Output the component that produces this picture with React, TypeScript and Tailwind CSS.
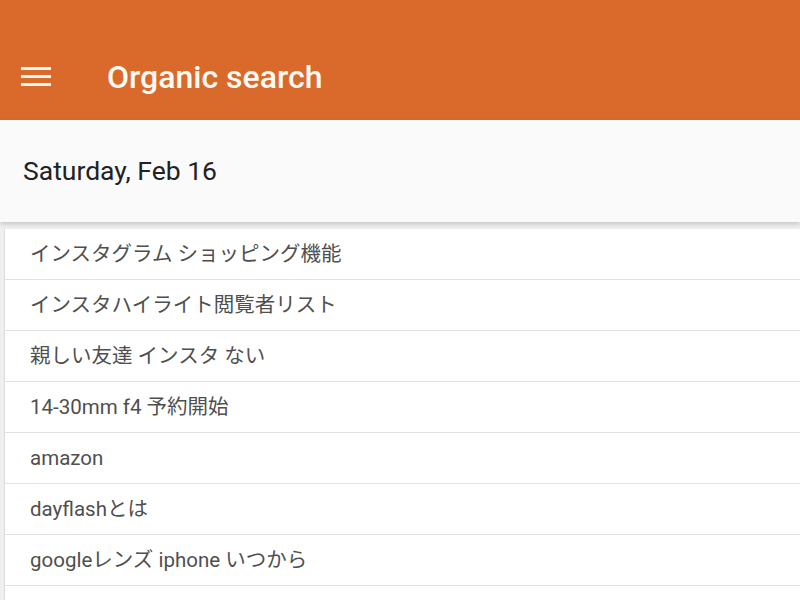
import React from "react";

const queries = [
  "インスタグラム ショッピング機能",
  "インスタハイライト閲覧者リスト",
  "親しい友達 インスタ ない",
  "14-30mm f4 予約開始",
  "amazon",
  "dayflashとは",
  "googleレンズ iphone いつから",
  "",
];

export default function App() {
  return (
    <div
      className="w-[800px] h-[600px] overflow-hidden bg-[#efefef] flex flex-col"
      style={{ fontFamily: 'Roboto, "Noto Sans CJK JP", sans-serif' }}
    >
      {/* App bar with status-bar space on top */}
      <header className="bg-[#d96a2b] h-[120px] pt-[32px] shrink-0">
        <div className="h-[88px] flex items-center">
          <button type="button" aria-label="Menu" className="ml-[21px] w-[30px] flex flex-col gap-[5px]">
            <span className="block h-[3px] w-[30px] bg-[#fff7ee]" />
            <span className="block h-[3px] w-[30px] bg-[#fff7ee]" />
            <span className="block h-[3px] w-[30px] bg-[#fff7ee]" />
          </button>
          <h1 className="ml-[56px] mt-[2px] text-[32px] font-medium text-[#fffaf3] leading-none">
            Organic search
          </h1>
        </div>
      </header>

      {/* Date bar */}
      <div className="relative z-10 h-[102px] shrink-0 bg-[#fafafa] flex items-center pl-[23px] shadow-[0_2px_5px_rgba(0,0,0,0.18)]">
        <div className="text-[26.5px] text-[#222222] leading-none">Saturday, Feb 16</div>
      </div>

      {/* Query list */}
      <ul className="mt-[7px] ml-[4px] flex-1 bg-white border-l border-[#dcdcdc]">
        {queries.map((q, i) => (
          <li
            key={i}
            className="h-[51px] border-b border-[#e2e2e2] flex items-center pl-[25px] text-[20.5px] text-[#4f4f4f]"
          >
            {q}
          </li>
        ))}
      </ul>
    </div>
  );
}
